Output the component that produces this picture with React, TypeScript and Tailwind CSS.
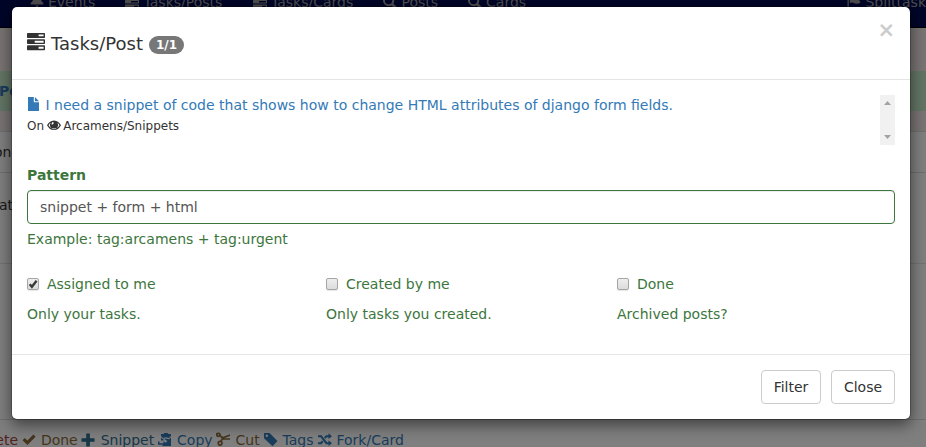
import React from "react";

type IconProps = { className?: string; children: React.ReactNode };

function Glyph({ className = "top-0", children }: IconProps) {
  return (
    <svg
      viewBox="0 0 14 14"
      fill="currentColor"
      className={`relative inline-block size-[1em] shrink-0 align-[-0.125em] ${className}`}
    >
      {children}
    </svg>
  );
}

const TasksIcon = ({ className }: { className?: string }) => (
  <Glyph className={className}>
    <path
      fillRule="evenodd"
      d="M.6 0h12.8q.6 0 .6.6v2.700q0 .6-.6.6H.6q-.6 0-.6-.6V.6Q0 0 .6 0zM9 1.100v1.500h3.900V1.100zM.6 4.900h12.800q.6 0 .6.6v2.500q0 .6-.6.6H.6Q0 8.600 0 8V5.500q0-.6.6-.6zM6 6v1.500h6.900V6zM.6 9.600h12.800q.6 0 .6.6v2.700q0 .6-.6.6H.6q-.6 0-.6-.6v-2.700q0-.6.6-.6zM9 10.700v1.500h3.900v-1.500z"
    />
  </Glyph>
);
const BellIcon = () => (
  <Glyph>
    <path d="M7 0q1 0 1 1.200Q10.500 2 10.700 4q.2 2 2.600 4v1.500H.7V8Q3.100 6 3.300 4 3.500 2 6 1.200 6 0 7 0zM5.500 10.500h3Q8.300 12 7 12t-1.500-1.500z" />
  </Glyph>
);
const SearchIcon = () => (
  <Glyph>
    <path
      fillRule="evenodd"
      d="M5.600 0a5.600 5.600 0 0 1 4.700 8.600l3.400 3.300-1.800 1.900-3.400-3.400A5.600 5.600 0 1 1 5.600 0zm0 1.900a3.700 3.700 0 1 0 0 7.400 3.700 3.700 0 0 0 0-7.400z"
    />
  </Glyph>
);
const FlagIcon = () => (
  <Glyph>
    <path d="M.5 0h1.300v14H.5zM2.800 1.200Q5 0 7.500 1.300T13.500 1L12 4.500l1.500 3.300Q10 9.500 7.500 8.200T2.800 8z" />
  </Glyph>
);
const FileIcon = () => (
  <Glyph className="top-[-1px]">
    <path d="M1 0h5.800v5.200H12V14H1zM7.900 0L12 4.200H7.900z" />
  </Glyph>
);
const EyeIcon = () => (
  <svg viewBox="0 0 14 14" fill="currentColor" className="-ml-px -mr-[1.500px] inline-block size-[14px] align-[-3px]">
    <path
      fillRule="evenodd"
      d="M7 1.500c3.300 0 5.700 2.200 7 4.800-1.300 2.600-3.700 4.800-7 4.800S1.300 8.900 0 6.300C1.300 3.700 3.700 1.500 7 1.500zM3.700 3.800Q2.400 4.700 1.500 6.300c1.200 2.100 3.100 3.300 5.500 3.300s4.300-1.200 5.500-3.300q-.9-1.600-2.200-2.500a4 4 0 1 1-6.600 0zM5.700 3.100q-1.300.8-1.200 2.400l1.200.1q.2-1 1.400-1.600z"
    />
  </svg>
);
const OkIcon = () => (
  <Glyph className="left-[-0.5px] top-0">
    <path d="M.5 7.200l2.300-2.200 2.600 2.600L11.400 1.500l2.200 2.200-8.200 8.300z" />
  </Glyph>
);
const PlusIcon = () => (
  <Glyph className="left-[-1px] top-0">
    <path d="M5.200.5h3.700v4.700h4.700v3.500H8.900v4.700H5.200V8.700H.5V5.200h4.700z" />
  </Glyph>
);
const PasteIcon = () => (
  <Glyph className="left-[-0.5px] top-0">
    <path d="M3 1h2.500L6.500 0h3l1 1H13v2L11 5 8 4.200 5 5 3 3zM3 4.500L5 6.200l3-.8 3 .8 2-1.700V13H4.500V12l5-3.700-4-3v2.200H3zM0 8.500h1.500v1.700h4V8L8.700 10.700 5.500 13.500v-1.700H0z" />
  </Glyph>
);
const ScissorsIcon = () => (
  <Glyph className="left-[-1px] top-[-1px]">
    <g fill="none" stroke="currentColor" strokeWidth="1.700">
      <ellipse cx="2.300" cy="2.800" rx="1.700" ry="1.500" />
      <circle cx="4.100" cy="11.300" r="1.900" />
      <path d="M3.800 3.800l3 2L14.500 3M5 9.600l1.500-3.600M6 7h9" />
    </g>
  </Glyph>
);
const TagIcon = () => (
  <Glyph className="left-[-0.5px] top-0">
    <path
      fillRule="evenodd"
      d="M.5 0h5l8 8-5 5.300L0 5.300V.5zM2.800 1.500a1.200 1.200 0 1 0 0 2.400 1.200 1.200 0 0 0 0-2.400z"
    />
  </Glyph>
);
const RandomIcon = () => (
  <Glyph className="left-[-0.5px] top-0">
    <path
      d="M0 3.200h3.100l5.300 7h3M0 10.200h3.100l1.600-2.100M6.900 5.200l1.500-2h3"
      fill="none"
      stroke="currentColor"
      strokeWidth="2.100"
    />
    <path d="M10.500.3L14 3.200l-3.500 2.900zM10.500 7.300l3.500 2.900-3.500 2.900z" />
  </Glyph>
);

function CheckOption({ label, help, checked = false }: { label: string; help: string; checked?: boolean }) {
  return (
    <div>
      <label className="flex h-5 items-center">
        <span className="mr-2 flex size-3 items-center justify-center rounded-[2px] border border-[#a5a5a5] bg-linear-to-b from-[#eeeeee] to-[#dcdcdc] shadow-[0_1px_1px_rgba(0,0,0,0.1)]">
          {checked && (
            <svg viewBox="0 0 10 10" className="size-[10px] shrink-0 overflow-visible">
              <path d="M1.700 5.200l2.200 2.600L8.600 1.700" fill="none" stroke="#3b3b3b" strokeWidth="2.400" />
            </svg>
          )}
        </span>
        {label}
      </label>
      <p className="mt-2.5 leading-5">{help}</p>
    </div>
  );
}

function BackgroundPage() {
  return (
    <div className="h-full overflow-hidden bg-white">
      <nav className="h-7 overflow-hidden whitespace-nowrap border-b border-black bg-[#030a50] text-[#9d9d9d]">
        <div className="-mt-2 flex h-5 items-center">
          <span className="ml-[29.500px] w-[96px]"><BellIcon /> Events</span>
          <span className="w-32"><TasksIcon /> Tasks/Posts</span>
          <span className="w-[131px]"><TasksIcon /> Tasks/Cards</span>
          <span className="w-[85px]"><SearchIcon /> Posts</span>
          <span className="w-[381px]"><SearchIcon /> Cards</span>
          <span><FlagIcon /> Splittask</span>
        </div>
      </nav>
      <div className="h-[43px] bg-[#f5e9e8]" />
      <div className="-ml-0.5 flex h-10 items-center bg-[#c7eacb] pl-px font-bold text-[#337ab7]">Posts</div>
      <div className="h-[21px] border-b border-[#dddddd] bg-[#f5e9e8]" />
      <div className="-ml-[6px] flex h-[41px] items-center border-b border-[#dddddd] text-[#333]">on</div>
      <div className="-ml-px h-[91px] border-b border-[#e4e4e4] pt-[22px] leading-5 text-[#333]">at</div>
      <div className="h-[156px] border-b border-[#dddddd]" />
      <div className="-ml-7 whitespace-nowrap pt-2.5 leading-5">
        <span className="text-[#a94442]">Delete</span>{" "}
        <span className="text-[#8a6d3b]"><OkIcon /> Done</span>{" "}
        <span className="text-[#31708f]"><PlusIcon /> Snippet</span>{" "}
        <span className="text-[#337ab7]"><PasteIcon /> Copy</span>{" "}
        <span className="text-[#8a6d3b]"><ScissorsIcon /> Cut</span>{" "}
        <span className="text-[#337ab7]"><TagIcon /> Tags</span>{" "}
        <span className="text-[#337ab7]"><RandomIcon /> Fork/Card</span>
      </div>
    </div>
  );
}

export default function App() {
  return (
    <div className="relative h-[447px] w-[926px] overflow-hidden font-['DejaVu_Sans',sans-serif] text-sm leading-5 text-[#333]">
      <BackgroundPage />
      <div className="absolute inset-0 bg-black/50" />
      <section
        role="dialog"
        className="absolute left-[11px] top-1.5 flex h-[414px] w-[900px] flex-col rounded-md border border-black/20 bg-white bg-clip-padding shadow-[0_5px_15px_rgba(0,0,0,0.5)]"
      >
        <header className="flex h-[73px] shrink-0 items-start justify-between border-b border-[#e5e5e5] px-[15px]">
          <h4 className="mt-[27px] flex items-center text-lg leading-5">
            <TasksIcon className="top-[-2px]" />
            <span className="ml-1.5">Tasks/Post</span>
            <span className="ml-1.5 mt-px rounded-[10px] bg-[#777] px-[7px] py-[3px] text-xs font-bold leading-3 text-white">1/1</span>
          </h4>
          <button className="mt-[13px] text-[21px] font-bold leading-[21px] text-[#ccc]">×</button>
        </header>

        <div className="h-[274px] shrink-0 px-[15px] pt-[15px]">
          <div className="flex h-[50px] justify-between">
            <div>
              <a className="block text-[#337ab7]"><FileIcon /> I need a snippet of code that shows how to change HTML attributes of django form fields.</a>
              <p className="mt-px text-xs leading-5">On <EyeIcon /> Arcamens/Snippets</p>
            </div>
            <div className="flex w-[15px] flex-col items-center justify-between bg-[#f1f1f1] py-1.5">
              <svg viewBox="0 0 7 4" className="h-1 w-[7px]" fill="#a3a3a3"><path d="M0 4L3.500 0 7 4z" /></svg>
              <svg viewBox="0 0 7 4" className="h-1 w-[7px]" fill="#a3a3a3"><path d="M0 0h7L3.500 4z" /></svg>
            </div>
          </div>
          <div className="mt-5 text-[#3c763d]">
            <label className="block font-bold">Pattern</label>
            <div className="mt-[5px] flex h-[34px] items-center rounded border border-[#3c763d] px-3 text-[#555] shadow-[inset_0_1px_1px_rgba(0,0,0,0.075)]">
              snippet + form + html
            </div>
            <p className="mt-[5px]">Example: tag:arcamens + tag:urgent</p>
            <div className="mt-[25px] grid grid-cols-[299px_291px_1fr]">
              <CheckOption label="Assigned to me" help="Only your tasks." checked />
              <CheckOption label="Created by me" help="Only tasks you created." />
              <CheckOption label="Done" help="Archived posts?" />
            </div>
          </div>
        </div>

        <footer className="flex flex-1 items-start justify-end gap-2.5 border-t border-[#e5e5e5] px-[15px] pt-[15px]">
          <button className="h-[34px] w-[60px] rounded border border-[#ccc] bg-white">Filter</button>
          <button className="h-[34px] w-16 rounded border border-[#ccc] bg-white">Close</button>
        </footer>
      </section>
    </div>
  );
}
